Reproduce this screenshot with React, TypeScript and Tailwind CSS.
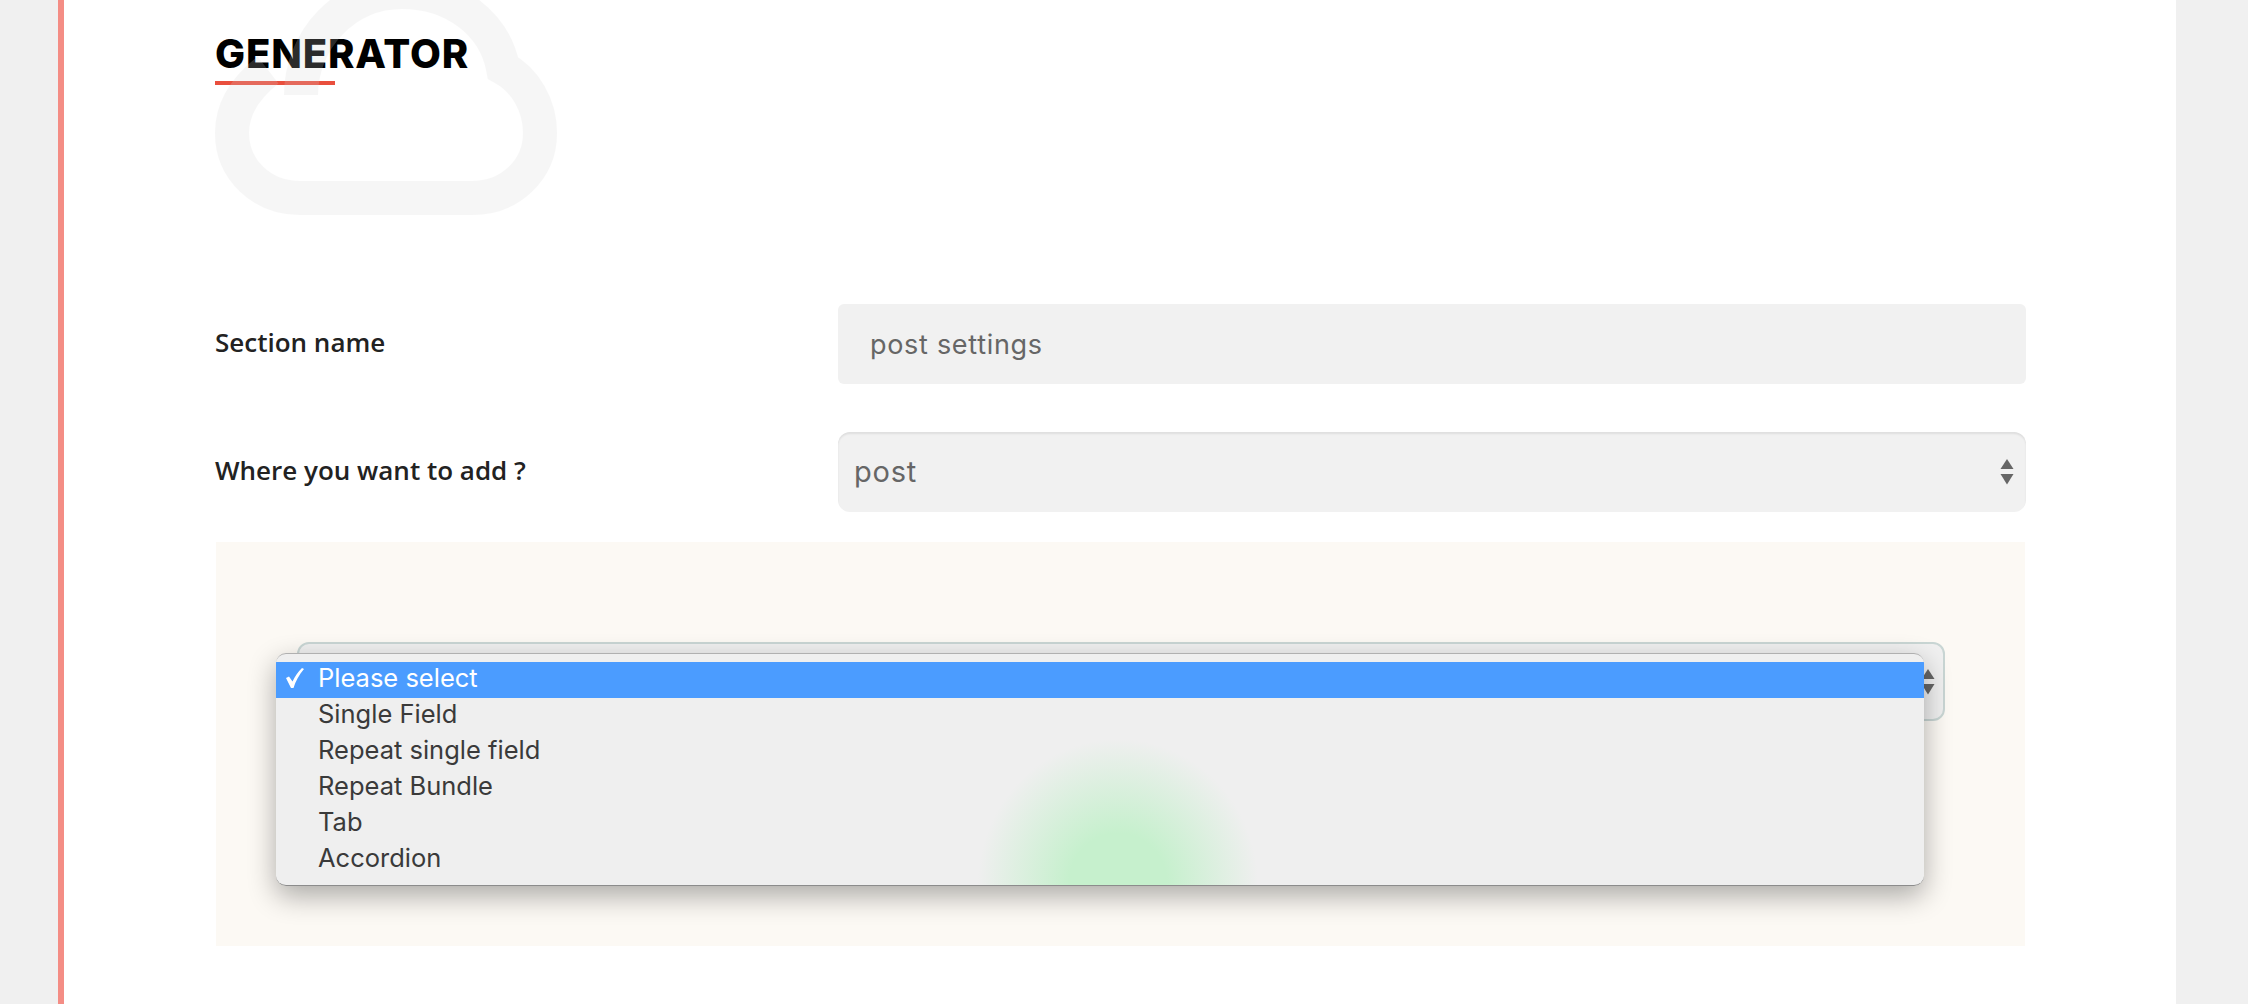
const menuItems = ["Single Field", "Repeat single field", "Repeat Bundle", "Tab", "Accordion"]

function SelectArrows() {
  return (
    <svg className="h-[26px] w-[14px] shrink-0" viewBox="0 0 14 26" fill="#666666">
      <path d="M7 0 L13.5 10 H0.5 Z" />
      <path d="M0.5 15 H13.5 L7 25.5 Z" />
    </svg>
  )
}

function CheckMark() {
  return (
    <svg className="ml-[10px] mr-[14px] h-[20px] w-[18px] shrink-0" viewBox="0 0 18 20" fill="#ffffff">
      <path d="M0 10 L3 8.5 L6.5 13.5 C9 8 12 4 16 0 L18 1 C13 7 9.5 13 7.5 20 L5 20 Z" />
    </svg>
  )
}

function CloudMark() {
  return (
    <svg
      className="pointer-events-none absolute left-[151px] top-0 h-[220px] w-[350px] opacity-20"
      viewBox="215 0 350 220"
      fill="none"
      stroke="#d6d6d6"
      strokeWidth="34"
    >
      <path d="M301 95 C301 40 345 -8 402 -8 C455 -8 495 25 503 68 C525 80 540 105 540 133 C540 170 510 198 472 198 H300 C262 198 232 170 232 133 C232 108 245 88 268 70" />
    </svg>
  )
}

function FieldRow({ label, children }: { label: string; children: React.ReactNode }) {
  return (
    <div className="flex items-center">
      <label className="w-[623px] shrink-0 pb-[4px] font-['Open_Sans',sans-serif] text-[26px] font-semibold text-[#222222]">
        {label}
      </label>
      {children}
    </div>
  )
}

export default function App() {
  return (
    <div className="flex h-screen overflow-hidden bg-[#f0f0f0] pl-[58px] pr-[72px]">
      <main className="relative flex-1 border-l-[6px] border-[#f48d85] bg-white pl-[151px] pr-[150px]">
        <CloudMark />
        <h1 className="pt-[29px] font-['Inter',sans-serif] text-[40px] font-extrabold leading-[49px] tracking-[0.85px] text-black">
          GENERATOR
        </h1>
        <div className="mt-[3px] h-[4px] w-[120px] bg-[#e94f3d]" />

        <div className="mt-[219px]">
          <FieldRow label="Section name">
            <input
              className="h-[80px] flex-1 rounded-[6px] bg-[#f1f1f1] px-[32px] font-['Inter',sans-serif] text-[27px] tracking-[0.7px] text-[#666666] outline-none"
              defaultValue="post settings"
              readOnly
            />
          </FieldRow>
        </div>
        <div className="mt-[48px]">
          <FieldRow label="Where you want to add ?">
            <div className="flex h-[80px] flex-1 items-center justify-between rounded-[12px] bg-[#f1f1f1] pl-[16px] pr-[12px] font-['Inter',sans-serif] text-[29px] tracking-[0.8px] text-[#666666] shadow-[inset_0_2px_2px_rgba(0,0,0,0.08)]">
              post
              <SelectArrows />
            </div>
          </FieldRow>
        </div>

        <section className="mx-[1px] mt-[30px] h-[404px] bg-[#fcf9f4] pl-[81px] pr-[80px] pt-[100px]">
          <div className="relative h-[79px] rounded-[12px] border-2 border-[#c9d6d4] bg-[#f0f0f0]">
            <div className="flex h-full items-center justify-end pr-[8px]">
              <SelectArrows />
            </div>
            <div className="pointer-events-none absolute left-[-23px] top-[9px] h-[233px] w-[1648px] rounded-[10px] shadow-[0_10px_28px_rgba(0,0,0,0.32)]" />
            <div className="absolute left-[-23px] top-[9px] h-[233px] w-[1648px] overflow-hidden rounded-[10px] border-b border-t border-b-[#8c8c8c] border-t-[#b0b0b0] bg-[#efefef] pt-[8px] font-['Inter',sans-serif] text-[25.5px] leading-[31px] text-[#3a3a3a]">
              <div className="absolute left-[702px] top-[85px] h-[290px] w-[280px] bg-[radial-gradient(closest-side,#c6f0cd_35%,rgba(198,240,205,0)_100%)]" />
              <div className="relative flex h-[36px] items-center bg-[#4b9cff] pb-[5px] text-white">
                <CheckMark />
                Please select
              </div>
              {menuItems.map((item) => (
                <div className="relative h-[36px] pl-[42px]" key={item}>
                  {item}
                </div>
              ))}
            </div>
          </div>
        </section>
      </main>
    </div>
  )
}
